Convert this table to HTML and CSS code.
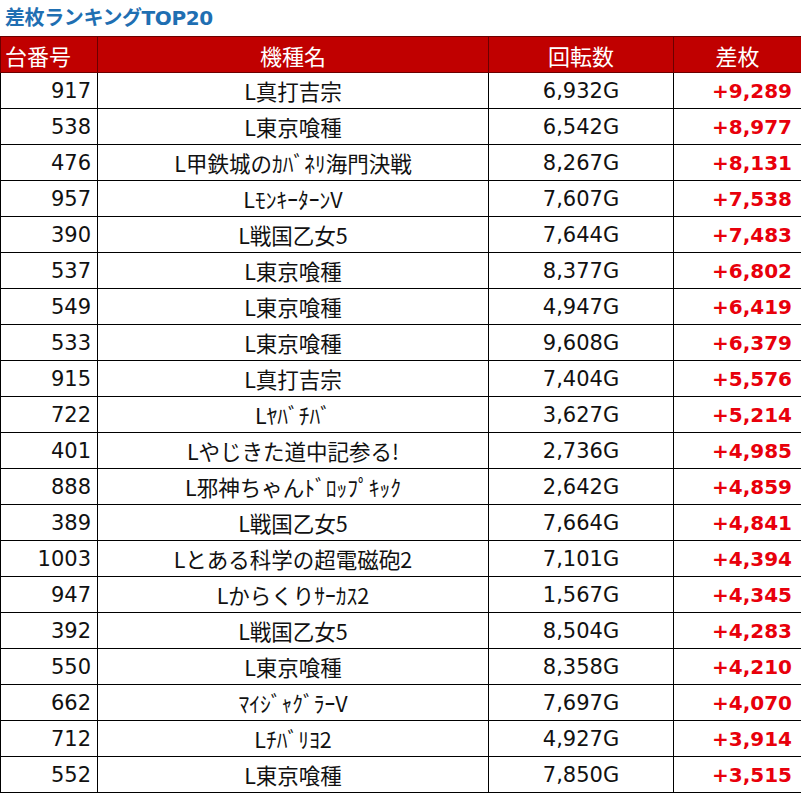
FILE: index.html
```html
<!DOCTYPE html>
<html lang="ja">
<head>
<meta charset="utf-8">
<link rel="stylesheet" href="styles.css">
</head>
<body>
<div class="page">
  <h1 class="title">差枚ランキングTOP20</h1>
  <table class="rank">
    <colgroup>
      <col class="c-no"><col class="c-name"><col class="c-spin"><col class="c-diff">
    </colgroup>
    <thead>
      <tr><th class="h-no">台番号</th><th>機種名</th><th>回転数</th><th>差枚</th></tr>
    </thead>
    <tbody>
      <tr><td class="no">917</td><td class="name">L真打吉宗</td><td class="spin">6,932G</td><td class="diff">+9,289</td></tr>
      <tr><td class="no">538</td><td class="name">L東京喰種</td><td class="spin">6,542G</td><td class="diff">+8,977</td></tr>
      <tr><td class="no">476</td><td class="name">L甲鉄城のｶﾊﾞﾈﾘ海門決戦</td><td class="spin">8,267G</td><td class="diff">+8,131</td></tr>
      <tr><td class="no">957</td><td class="name">LﾓﾝｷｰﾀｰﾝV</td><td class="spin">7,607G</td><td class="diff">+7,538</td></tr>
      <tr><td class="no">390</td><td class="name">L戦国乙女5</td><td class="spin">7,644G</td><td class="diff">+7,483</td></tr>
      <tr><td class="no">537</td><td class="name">L東京喰種</td><td class="spin">8,377G</td><td class="diff">+6,802</td></tr>
      <tr><td class="no">549</td><td class="name">L東京喰種</td><td class="spin">4,947G</td><td class="diff">+6,419</td></tr>
      <tr><td class="no">533</td><td class="name">L東京喰種</td><td class="spin">9,608G</td><td class="diff">+6,379</td></tr>
      <tr><td class="no">915</td><td class="name">L真打吉宗</td><td class="spin">7,404G</td><td class="diff">+5,576</td></tr>
      <tr><td class="no">722</td><td class="name">Lﾔﾊﾞﾁﾊﾞ</td><td class="spin">3,627G</td><td class="diff">+5,214</td></tr>
      <tr><td class="no">401</td><td class="name">Lやじきた道中記参る!</td><td class="spin">2,736G</td><td class="diff">+4,985</td></tr>
      <tr><td class="no">888</td><td class="name">L邪神ちゃんﾄﾞﾛｯﾌﾟｷｯｸ</td><td class="spin">2,642G</td><td class="diff">+4,859</td></tr>
      <tr><td class="no">389</td><td class="name">L戦国乙女5</td><td class="spin">7,664G</td><td class="diff">+4,841</td></tr>
      <tr><td class="no">1003</td><td class="name">Lとある科学の超電磁砲2</td><td class="spin">7,101G</td><td class="diff">+4,394</td></tr>
      <tr><td class="no">947</td><td class="name">Lからくりｻｰｶｽ2</td><td class="spin">1,567G</td><td class="diff">+4,345</td></tr>
      <tr><td class="no">392</td><td class="name">L戦国乙女5</td><td class="spin">8,504G</td><td class="diff">+4,283</td></tr>
      <tr><td class="no">550</td><td class="name">L東京喰種</td><td class="spin">8,358G</td><td class="diff">+4,210</td></tr>
      <tr><td class="no">662</td><td class="name">ﾏｲｼﾞｬｸﾞﾗｰV</td><td class="spin">7,697G</td><td class="diff">+4,070</td></tr>
      <tr><td class="no">712</td><td class="name">Lﾁﾊﾞﾘﾖ2</td><td class="spin">4,927G</td><td class="diff">+3,914</td></tr>
      <tr><td class="no">552</td><td class="name">L東京喰種</td><td class="spin">7,850G</td><td class="diff">+3,515</td></tr>
    </tbody>
  </table>
</div>
</body>
</html>
```

FILE: styles.css
```css
html, body {
  margin: 0;
  padding: 0;
  background: #ffffff;
}

.page {
  width: 801px;
  font-family: "DejaVu Sans", "Noto Sans CJK JP", sans-serif;
  color: #111111;
}

.title {
  margin: 0;
  height: 36px;
  box-sizing: border-box;
  padding: 5px 0 0 5px;
  font-size: 20px;
  line-height: 27px;
  font-weight: bold;
  color: #1f6fb2;
  font-family: "DejaVu Sans", "Noto Sans CJK JP", sans-serif;
  letter-spacing: -0.4px;
}

.rank {
  border-collapse: collapse;
  table-layout: fixed;
  width: 801px;
}

.c-no { width: 97px; }
.c-name { width: 391px; }
.c-spin { width: 185px; }
.c-diff { width: 128px; }

.rank th {
  height: 36px;
  box-sizing: border-box;
  padding: 0;
  background: #c00000;
  color: #ffffff;
  font-weight: normal;
  font-size: 22px;
  font-family: "Noto Sans CJK JP", sans-serif;
  border: 1px solid #6b0000;
  text-align: center;
  line-height: 34px;
}

.rank th.h-no {
  text-align: left;
  padding-left: 4px;
}

.rank td {
  height: 36px;
  box-sizing: border-box;
  padding: 0;
  border: 1px solid #000000;
  font-size: 21px;
  line-height: 34px;
  white-space: nowrap;
  overflow: hidden;
}

.rank td.no {
  text-align: right;
  padding-right: 6px;
}

.rank td.name {
  text-align: center;
  font-family: "Noto Sans CJK JP", sans-serif;
  font-size: 21.5px;
}

.rank td.spin {
  text-align: center;
}

.rank td.diff {
  text-align: right;
  padding-right: 9px;
  font-weight: bold;
  color: #e8000b;
  font-size: 20px;
}
```
